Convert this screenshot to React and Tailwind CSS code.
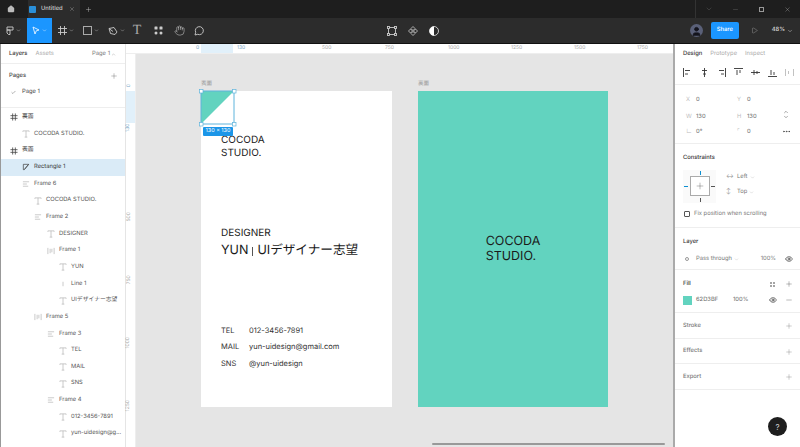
import React from "react";
import { Home, Plus, X, ChevronDown, ChevronUp, Minus, Check, Eye, Hand, Play, User, MoreHorizontal } from "lucide-react";

const layers = [
    { depth: 0, name: "裏面", icon: "frame", bold: true },
    { depth: 1, name: "COCODA STUDIO.", icon: "text" },
    { depth: 0, name: "表面", icon: "frame", bold: true },
    { depth: 1, name: "Rectangle 1", icon: "vector", selected: true },
    { depth: 1, name: "Frame 6", icon: "stack" },
    { depth: 2, name: "COCODA STUDIO.", icon: "text" },
    { depth: 2, name: "Frame 2", icon: "stack" },
    { depth: 3, name: "DESIGNER", icon: "text" },
    { depth: 3, name: "Frame 1", icon: "bars" },
    { depth: 4, name: "YUN", icon: "text" },
    { depth: 4, name: "Line 1", icon: "line" },
    { depth: 4, name: "UIデザイナー志望", icon: "text" },
    { depth: 2, name: "Frame 5", icon: "bars" },
    { depth: 3, name: "Frame 3", icon: "stack" },
    { depth: 4, name: "TEL", icon: "text" },
    { depth: 4, name: "MAIL", icon: "text" },
    { depth: 4, name: "SNS", icon: "text" },
    { depth: 3, name: "Frame 4", icon: "stack" },
    { depth: 4, name: "012-3456-7891", icon: "text" },
    { depth: 4, name: "yun-uidesign@g...", icon: "text" },
];

const rulerTop = [
    { label: "500", x: 196 },
    { label: "750", x: 259 },
    { label: "1000", x: 322 },
    { label: "1250", x: 385 },
    { label: "1500", x: 448 },
    { label: "1750", x: 511 },
];

const LayerIcon = ({ type }) => {
    const c = "#b4b4b4";
    return (
        <svg width="8" height="8" viewBox="0 0 9 9" fill="none" stroke={c} strokeWidth="0.8">
            {type === "frame" && <path d="M3 .5v8M6 .5v8M.5 3h8M.5 6h8" stroke="#444" strokeWidth="0.9" />}
            {type === "text" && <path d="M1 2V1h7v1M4.500 1v7M3 8h3" />}
            {type === "vector" && <path d="M1.500 1.500h6l-5 6h-1zM7.500 1.500 2.500 7.500" stroke="#444" />}
            {type === "stack" && <path d="M1 2h7M1 4.500h4.500M1 7h6" />}
            {type === "bars" && <path d="M1 1v7M8 1v7M3.500 2v5M5.500 2v4" />}
            {type === "line" && <path d="M4.500 2v5" />}
        </svg>
    );
};

const LayerRow = ({ layer }) => {
    const pad = { 0: "pl-[9px]", 1: "pl-[21px]", 2: "pl-[33px]", 3: "pl-[46px]", 4: "pl-[58px]" }[layer.depth];
    return (
        <div className={`flex h-[16.67px] shrink-0 items-center gap-[4px] ${pad} ${layer.selected ? "bg-[#daebf7]" : ""}`}>
            <LayerIcon type={layer.icon} />
            <span className={`whitespace-nowrap text-[5.800px] ${layer.bold || layer.selected ? "text-[#333]" : "text-[#555]"}`}>{layer.name}</span>
        </div>
    );
};

const AlignIcon = ({ d, light }) => (
    <svg width="9" height="9" viewBox="0 0 9 9" fill="none" stroke={light ? "#bbb" : "#333"} strokeWidth="0.9">
        <path d={d} />
    </svg>
);

const SectionTitle = ({ label }) => (
    <div className="flex items-center justify-between">
        <span className="text-[5.800px] font-medium text-[#777]">{label}</span>
        <Plus size={8} strokeWidth={1} className="mr-[-1px] text-[#666]" />
    </div>
);

const App = () => {
    return (
        <div className="flex h-[447px] w-[800px] flex-col overflow-hidden bg-white font-['Inter','Noto_Sans_CJK_JP',sans-serif] [text-rendering:geometricPrecision]">
            {/* Title bar */}
            <div className="flex h-[18px] shrink-0 items-center bg-[#1e1e1e] text-[#d0d0d0]">
                <div className="flex w-[22px] justify-center">
                    <Home size={8} fill="#bbb" strokeWidth={1} />
                </div>
                <div className="ml-[6px] flex h-full w-[52px] items-center bg-[#2c2c2c] pl-[1px]">
                    <div className="h-[7px] w-[7px] rounded-[1px] bg-[#2a8fd8]" />
                    <span className="ml-[5px] text-[5.800px] font-medium text-[#ccc]">Untitled</span>
                    <X size={6} strokeWidth={1.2} className="ml-[6px]" />
                </div>
                <Plus size={7} strokeWidth={1.4} className="ml-[5px]" />
                <div className="ml-auto flex h-full items-center border-l border-[#333]">
                    <div className="flex w-[26px] justify-center"><ChevronDown size={8} strokeWidth={1} className="text-[#777]" /></div>
                    <div className="flex w-[26px] justify-center"><Minus size={7} strokeWidth={1} className="text-[#888]" /></div>
                    <div className="flex w-[26px] justify-center"><div className="h-[5px] w-[5px] border border-[#999]" /></div>
                    <div className="flex w-[26px] justify-center"><X size={7} strokeWidth={1} /></div>
                </div>
            </div>

            {/* Toolbar */}
            <div className="flex h-[26px] shrink-0 items-center border-b border-[#111] bg-[#2c2c2c] text-[#ccc]">
                <div className="flex w-[27px] items-center justify-center gap-[2px]">
                    <svg width="8" height="9" viewBox="0 0 8 9" fill="none" stroke="#ccc" strokeWidth="0.9">
                        <path d="M1 1h6v3H1zM1 4h3v4.500H2.500L1 7z" />
                    </svg>
                    <ChevronDown size={5} />
                </div>
                <div className="flex h-full w-[25px] items-center justify-center gap-[2px] bg-[#1b96ff]">
                    <svg width="8" height="9" viewBox="0 0 8 9" fill="none" stroke="#fff" strokeWidth="0.8">
                        <path d="M1 1l6 3-2.700.800L3 8z" />
                    </svg>
                    <ChevronDown size={5} className="text-white" />
                </div>
                <div className="flex w-[27px] items-center justify-center gap-[2px]">
                    <svg width="9" height="9" viewBox="0 0 9 9" fill="none" stroke="#ccc" strokeWidth="0.9">
                        <path d="M2.500 0v9M6.500 0v9M0 2.500h9M0 6.500h9" />
                    </svg>
                    <ChevronDown size={5} />
                </div>
                <div className="flex w-[24px] items-center justify-center gap-[2px]">
                    <div className="h-[9px] w-[9px] border border-[#aaa]" />
                    <ChevronDown size={5} />
                </div>
                <div className="flex w-[26px] items-center justify-center gap-[2px]">
                    <svg width="10" height="10" viewBox="0 0 10 10" fill="none" stroke="#ccc" strokeWidth="0.9">
                        <path d="M1 2.500 6 1.500 9 6 7 8.500 2.500 7.500zM1 2.500l4 3" />
                    </svg>
                    <ChevronDown size={5} />
                </div>
                <span className="flex w-[16px] justify-center font-['Liberation_Serif',serif] text-[14px] leading-none text-[#aaa]">T</span>
                <div className="ml-[2px] grid w-[22px] justify-center">
                    <svg width="9" height="9" viewBox="0 0 9 9" fill="#ccc">
                        <rect x="0.500" y="0.500" width="3" height="3" rx="0.500" />
                        <rect x="5.500" y="0.500" width="3" height="3" rx="0.500" />
                        <circle cx="2" cy="7" r="1.500" />
                        <circle cx="7" cy="7" r="1.500" />
                    </svg>
                </div>
                <div className="flex w-[20px] justify-center">
                    <Hand size={11} strokeWidth={1.200} />
                </div>
                <div className="flex w-[20px] justify-center">
                    <svg width="10" height="10" viewBox="0 0 10 10" fill="none" stroke="#ccc" strokeWidth="0.9">
                        <path d="M1 9l.700-2.700A4 4 0 1 1 3.700 8.300z" />
                    </svg>
                </div>

                {/* center tools */}
                <div className="ml-[178px] flex w-[52px] items-center justify-between">
                    <svg width="10" height="10" viewBox="0 0 10 10" fill="none" stroke="#ccc" strokeWidth="0.9">
                        <rect x="1.500" y="1.500" width="7" height="7" />
                        <rect x="0.500" y="0.500" width="2" height="2" fill="#2c2c2c" />
                        <rect x="7.500" y="0.500" width="2" height="2" fill="#2c2c2c" />
                        <rect x="0.500" y="7.500" width="2" height="2" fill="#2c2c2c" />
                        <rect x="7.500" y="7.500" width="2" height="2" fill="#2c2c2c" />
                    </svg>
                    <svg width="10" height="10" viewBox="0 0 10 10" fill="none" stroke="#ccc" strokeWidth="0.8">
                        <path d="M5 .5 7 2.500 5 4.500 3 2.500zM5 5.500 7 7.500 5 9.500 3 7.500zM2.500 3 4.500 5 2.500 7 .5 5zM7.500 3 9.500 5 7.500 7 5.500 5z" />
                    </svg>
                    <svg width="10" height="10" viewBox="0 0 10 10">
                        <circle cx="5" cy="5" r="4.500" fill="#2c2c2c" stroke="#eee" strokeWidth="0.800" />
                        <path d="M5 .5a4.500 4.500 0 0 0 0 9z" fill="#fff" />
                    </svg>
                </div>

                {/* right tools */}
                <div className="ml-auto flex items-center">
                    <div className="flex h-[13px] w-[13px] items-end justify-center overflow-hidden rounded-full bg-[#5a6078]">
                        <User size={11} fill="#14141c" stroke="#14141c" />
                    </div>
                    <div className="ml-[8px] flex h-[17px] w-[28px] items-center justify-center rounded-[2px] bg-[#1b96ff] text-[5.800px] font-medium text-white">Share</div>
                    <Play size={7} strokeWidth={1} className="ml-[12px] text-[#ddd]" />
                    <span className="ml-[14px] text-[5.800px] font-medium text-[#ddd]">48%</span>
                    <ChevronDown size={6} className="ml-[2px] mr-[7px]" />
                </div>
            </div>

            {/* Main */}
            <div className="flex min-h-0 flex-1">
                {/* Left panel */}
                <div className="flex w-[126px] shrink-0 flex-col overflow-hidden border-l border-r border-l-[#999] border-r-[#e5e5e5] bg-white">
                    <div className="flex h-[20px] shrink-0 items-center border-b border-[#eee] pl-[8px] pr-[9px] pt-[1px] text-[5.800px]">
                        <span className="font-medium text-[#333]">Layers</span>
                        <span className="ml-[8px] text-[#aaa]">Assets</span>
                        <span className="ml-auto text-[#777]">Page 1</span>
                        <ChevronUp size={5} className="ml-[1px] text-[#999]" />
                    </div>
                    <div className="flex h-[44px] shrink-0 flex-col border-b border-[#eee]">
                        <div className="flex h-[22px] items-center justify-between pl-[8px] pr-[7px] pt-[2px]">
                            <span className="text-[5.800px] font-medium text-[#444]">Pages</span>
                            <Plus size={8} strokeWidth={1} className="text-[#444]" />
                        </div>
                        <div className="flex h-[13px] items-center gap-[6px] pl-[10px] text-[5.800px] text-[#444]">
                            <Check size={5} strokeWidth={2} />
                            <span>Page 1</span>
                        </div>
                    </div>
                    <div className="flex flex-col pt-[1px]">
                        {layers.map((layer, i) => (
                            <LayerRow key={i} layer={layer} />
                        ))}
                    </div>
                </div>

                {/* Canvas */}
                <div className="flex min-w-0 flex-1 flex-col">
                    <div className="relative h-[10px] shrink-0 border-b border-[#eee] bg-white text-[5px] text-[#aaa]">
                        <div className="absolute left-[75px] top-0 h-full w-[32px] bg-[#e1f0fa]" />
                        <span className="absolute left-[70px] top-[1px] text-[#7aa8c8]">0</span>
                        <span className="absolute left-[111px] top-[1px] text-[#7aa8c8]">130</span>
                        {rulerTop.map((r) => (
                            <span key={r.label} className="absolute top-[1px]" style={{ left: r.x }}>{r.label}</span>
                        ))}
                    </div>
                    <div className="flex min-h-0 flex-1">
                        <div className="relative w-[10px] shrink-0 border-r border-[#eee] bg-white text-[5px] text-[#aaa]">
                            <div className="absolute left-0 top-[37px] h-[32px] w-full bg-[#e1f0fa]" />
                            <span className="absolute left-[2px] top-[28px] -rotate-90 text-[#7aa8c8]">0</span>
                            <span className="absolute left-[-1px] top-[70px] -rotate-90 text-[#7aa8c8]">130</span>
                            <span className="absolute left-[-1px] top-[159px] -rotate-90">500</span>
                            <span className="absolute left-[-1px] top-[222px] -rotate-90">750</span>
                            <span className="absolute left-[-3px] top-[285px] -rotate-90">1000</span>
                            <span className="absolute left-[-3px] top-[348px] -rotate-90">1250</span>
                        </div>
                        <div className="relative min-w-0 flex-1 bg-[#e5e5e5] text-[#1a1a1a]">
                            {/* front card */}
                            <span className="absolute left-[65px] top-[27px] text-[5.500px] leading-[7px] text-[#999]">表面</span>
                            <div className="absolute left-[65px] top-[37px] h-[316px] w-[191px] bg-white">
                                <div className="absolute left-[20px] top-[43px] text-[10px] leading-[12.500px]">COCODA<br />STUDIO.</div>
                                <div className="absolute left-[20px] top-[136px] text-[10px] leading-[12px]">DESIGNER</div>
                                <div className="absolute left-[20px] top-[152px] flex items-center whitespace-nowrap text-[12.600px] leading-[16px]">
                                    YUN
                                    <span className="mx-[4px] h-[9px] w-px bg-[#555]" />
                                    UIデザイナー志望
                                </div>
                                <div className="absolute left-[20px] top-[234.500px] grid grid-cols-[28px_1fr] gap-y-[7.500px] whitespace-nowrap text-[7.500px] leading-[9px] text-[#333]">
                                    <span>TEL</span><span>012-3456-7891</span>
                                    <span>MAIL</span><span>yun-uidesign@gmail.com</span>
                                    <span>SNS</span><span>@yun-uidesign</span>
                                </div>
                            </div>

                            {/* selected rectangle */}
                            <svg className="absolute left-[63px] top-[35px]" width="38" height="38" viewBox="0 0 38 38" fill="none">
                                <path d="M2 2h33L2 35z" fill="#62d3bf" />
                                <rect x="2" y="2" width="33" height="33" stroke="#5fb4dc" strokeWidth="1" />
                                {[[2, 2], [35, 2], [2, 35], [35, 35]].map(([x, y]) => (
                                    <rect key={`${x}-${y}`} x={x - 1.5} y={y - 1.5} width="3.500" height="3.500" fill="#fff" stroke="#5fb4dc" strokeWidth="0.700" />
                                ))}
                            </svg>
                            <div className="absolute left-[67px] top-[73px] flex h-[9px] w-[30px] items-center justify-center rounded-[1px] bg-[#1b96e8] text-[5.500px] text-white">130 × 130</div>

                            {/* back card */}
                            <span className="absolute left-[282px] top-[27px] text-[5.500px] leading-[7px] text-[#999]">裏面</span>
                            <div className="absolute left-[282px] top-[37px] flex h-[316px] w-[190px] items-center justify-center bg-[#62d3bf]">
                                <div className="text-[12.500px] leading-[15px]">COCODA<br />STUDIO.</div>
                            </div>

                            {/* scrollbar */}
                            <div className="absolute bottom-[2px] left-[296px] h-[2px] w-[233px] rounded-full bg-[#999]" />
                        </div>
                    </div>
                </div>

                {/* Right panel */}
                <div className="relative flex w-[127px] shrink-0 flex-col border-l-2 border-l-[#aaa] bg-white text-[5.800px]">
                    <div className="flex h-[20px] shrink-0 items-center gap-[8px] pl-[8px] pt-[1px]">
                        <span className="font-medium text-[#333]">Design</span>
                        <span className="text-[#aaa]">Prototype</span>
                        <span className="text-[#aaa]">Inspect</span>
                    </div>
                    <div className="flex h-[21px] shrink-0 items-center gap-[8px] border-b border-[#eee] pb-[4px] pl-[8px]">
                        <AlignIcon d="M.5 0v9M2 2.500h5M2 6h3" />
                        <AlignIcon d="M4.500 0v9M2 2.500h5M3 6h3" />
                        <AlignIcon d="M8.500 0v9M2 2.500h5M4 6h3" />
                        <AlignIcon d="M0 .5h9M3 2v5M6 2v3" />
                        <AlignIcon d="M0 4.500h9M3 2v5M6 3v3" />
                        <AlignIcon d="M0 8.500h9M3 2v5M6 4v3" />
                        <AlignIcon light d="M.5 1v7M8.500 1v7M3.500 3v3" />
                    </div>
                    <div className="relative grid h-[59px] shrink-0 grid-cols-[51px_1fr] content-start gap-y-[7px] border-b border-[#eee] pl-[11px] pt-[8px] text-[#666]">
                        <span className="mt-[3px]"><span className="mr-[5px] inline-block w-[5px] text-[#bbb]">X</span>0</span>
                        <span className="mt-[3px]"><span className="mr-[5px] inline-block w-[5px] text-[#bbb]">Y</span>0</span>
                        <span className="mt-[1px]"><span className="mr-[5px] inline-block w-[5px] text-[#bbb]">W</span>130</span>
                        <span className="mt-[1px]"><span className="mr-[5px] inline-block w-[5px] text-[#bbb]">H</span>130</span>
                        <span><span className="mr-[5px] inline-block w-[5px] text-[#bbb]">∟</span>0°</span>
                        <span><span className="mr-[5px] inline-block w-[5px] text-[#bbb]">⌜</span>0</span>
                        <MoreHorizontal size={9} className="absolute right-[9px] top-[42px] text-[#444]" />
                        <ChevronUp size={6} className="absolute right-[11px] top-[24px] text-[#555]" />
                        <ChevronDown size={6} className="absolute right-[11px] top-[29px] text-[#555]" />
                    </div>
                    <div className="flex h-[84px] shrink-0 flex-col border-b border-[#eee] px-[8px] pt-[10px]">
                        <span className="font-medium text-[#333]">Constraints</span>
                        <div className="mt-[7px] flex">
                            <div className="relative flex h-[33px] w-[33px] items-center justify-center bg-[#fafafa]">
                                <div className="flex h-[20px] w-[20px] items-center justify-center border border-[#aaa] bg-white">
                                    <Plus size={10} strokeWidth={0.8} className="text-[#333]" />
                                </div>
                                <div className="absolute left-1/2 top-[1px] h-[4px] w-[1px] bg-[#0d8fd1]" />
                                <div className="absolute bottom-[1px] left-1/2 h-[4px] w-[1px] bg-[#555]" />
                                <div className="absolute left-[1px] top-1/2 h-[1px] w-[4px] bg-[#0d8fd1]" />
                                <div className="absolute right-[1px] top-1/2 h-[1px] w-[4px] bg-[#555]" />
                            </div>
                            <div className="ml-[10px] flex flex-col gap-[7px] pt-[3px] text-[#777]">
                                <div className="flex items-center"><span className="w-[11px] text-[#999]">↔</span>Left<ChevronDown size={5} className="ml-[2px] text-[#bbb]" /></div>
                                <div className="flex items-center"><span className="w-[11px] text-[#999]">↕</span>Top<ChevronDown size={5} className="ml-[2px] text-[#bbb]" /></div>
                            </div>
                        </div>
                        <div className="ml-[1px] mt-[7px] flex items-center gap-[4px] text-[#777]">
                            <div className="h-[6px] w-[6px] rounded-[1px] border border-[#555]" />
                            <span className="whitespace-nowrap">Fix position when scrolling</span>
                        </div>
                    </div>
                    <div className="flex h-[42px] shrink-0 flex-col border-b border-[#eee] px-[8px] pt-[10px]">
                        <span className="font-medium text-[#333]">Layer</span>
                        <div className="mt-[8px] flex items-center text-[#777]">
                            <div className="ml-[2px] mr-[7px] h-[4px] w-[4px] rounded-full border border-[#999]" />
                            Pass through
                            <ChevronDown size={5} className="ml-[2px] text-[#bbb]" />
                            <span className="ml-auto">100%</span>
                            <Eye size={8} className="ml-[9px] mr-[-1px] text-[#333]" />
                        </div>
                    </div>
                    <div className="flex h-[43px] shrink-0 flex-col border-b border-[#eee] px-[8px] pt-[10px]">
                        <div className="flex items-center">
                            <span className="font-medium text-[#333]">Fill</span>
                            <svg className="ml-auto mr-[10px]" width="5" height="5" viewBox="0 0 5 5" fill="#333">
                                <circle cx="1" cy="1" r="0.800" /><circle cx="4" cy="1" r="0.800" /><circle cx="1" cy="4" r="0.800" /><circle cx="4" cy="4" r="0.800" />
                            </svg>
                            <Plus size={8} strokeWidth={1} className="mr-[-1px] text-[#333]" />
                        </div>
                        <div className="mt-[7px] flex items-center text-[#666]">
                            <div className="mr-[4px] h-[9px] w-[9px] bg-[#62d3bf]" />
                            <span className="w-[37px]">62D3BF</span>
                            <span>100%</span>
                            <Eye size={8} className="ml-auto text-[#333]" />
                            <Minus size={8} strokeWidth={1} className="ml-[8px] mr-[-1px] text-[#333]" />
                        </div>
                    </div>
                    <div className="flex h-[25.500px] shrink-0 flex-col justify-center border-b border-[#eee] px-[8px] pt-[2px]"><SectionTitle label="Stroke" /></div>
                    <div className="flex h-[25.500px] shrink-0 flex-col justify-center border-b border-[#eee] px-[8px] pt-[2px]"><SectionTitle label="Effects" /></div>
                    <div className="flex h-[25.500px] shrink-0 flex-col justify-center border-b border-[#eee] px-[8px] pt-[2px]"><SectionTitle label="Export" /></div>
                    <div className="absolute bottom-[11px] right-[13px] flex h-[19px] w-[19px] items-center justify-center rounded-full bg-[#1e1e1e] text-[8px] text-[#ccc]">?</div>
                </div>
            </div>
        </div>
    );
};

export default App;
